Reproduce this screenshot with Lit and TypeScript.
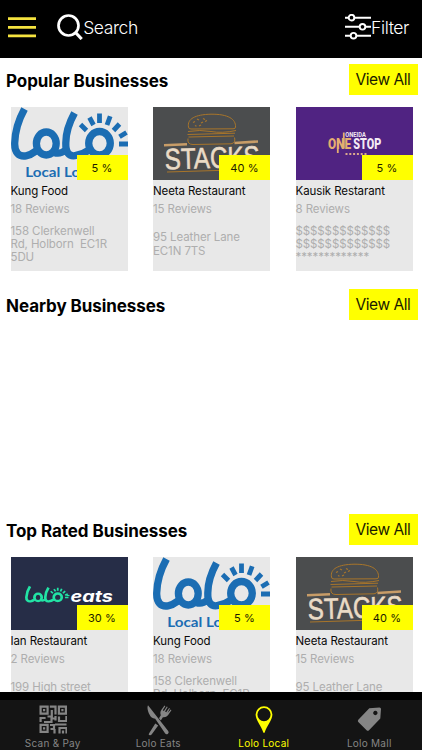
import { LitElement, html, svg, css } from "lit";
import { customElement, property } from "lit/decorators.js";

type Logo = "lolo" | "stacks" | "onestop" | "eats";

interface Business {
  logo: Logo;
  name: string;
  reviews: number;
  discount: number;
  address: string[];
}

const kungFood: Business = {
  logo: "lolo",
  name: "Kung Food",
  reviews: 18,
  discount: 5,
  address: ["158 Clerkenwell", "Rd, Holborn  EC1R", "5DU"],
};
const neeta: Business = {
  logo: "stacks",
  name: "Neeta Restaurant",
  reviews: 15,
  discount: 40,
  address: ["95 Leather Lane", "EC1N 7TS"],
};
const kausik: Business = {
  logo: "onestop",
  name: "Kausik Restarant",
  reviews: 8,
  discount: 5,
  address: ["$$$$$$$$$$$$$", "$$$$$$$$$$$$$", "*************"],
};
const ian: Business = {
  logo: "eats",
  name: "Ian Restaurant",
  reviews: 2,
  discount: 30,
  address: ["199 High street", "London"],
};

const loloMark = svg`
  <g fill="none" stroke="currentColor" stroke-width="7.3">
    <path d="M13.500 2C8 12 4 24 3.700 36C3.400 45.500 8 50 15 48.800Q20 47.800 25 44"/>
    <ellipse cx="35.300" cy="36.500" rx="9.900" ry="11.500"/>
    <path d="M43 45.500Q49 47.500 54 43.500"/>
    <path d="M63.500 6C58 16 54.800 26 54.800 36C54.500 45.500 58 49.500 64 48.700Q71 47.900 78 43"/>
    <ellipse cx="88.500" cy="36.200" rx="10.800" ry="11.700"/>
    <path stroke-width="4.800" d="M69.500 17.500L75.500 23.500M78.500 10.500L82.500 18M88.500 6.500V16M99.200 9.200L96 18M108.500 17L102.500 23.500M115.500 25.500L108.500 29.800M117.500 37H108"/>
  </g>`;

const logos = {
  lolo: svg`
    <rect width="117" height="73" fill="#e8e8e8"/>
    <g color="#1b6db3">${loloMark}</g>
    <text x="14.200" y="69.500" font-family="Lato, sans-serif" font-weight="700" font-size="14" fill="#1b6db3" textLength="55" lengthAdjust="spacingAndGlyphs">Local Lo</text>`,
  stacks: svg`
    <rect width="117" height="73" fill="#4b4d4e"/>
    <g fill="none" stroke="#a8752a" stroke-width="1">
      <path d="M35.500 20C34 12 42 7.500 58 7.200C75 7 83 12 82.500 20Q82.500 22 80 21.800L38 22Q35.500 22 35.500 20Z"/>
      <path d="M35 24.500Q47 22.500 58 24.500T83 23.500M34.500 27.500L82 26.200M35.500 30L81 29M35 31.500Q34 37.500 40 37.500L78 36.800Q83 36 81.500 30.500"/>
      <path d="M40 15.500l2-1M44 12l2 1M48 16l2-1M50 11.500l2 1M46 19l2-1M42 18.500l1.500 .8M52 14.500l2-1" stroke-width="1.200"/>
      <path d="M14 65L70 63.300"/>
    </g>
    <path d="M11 38.200L34 37.200M81.500 36L105 34.500" stroke="#c79c67" stroke-width="2.600"/>
    <text x="12" y="62.500" transform="rotate(-1.800 12 62.500)" font-family="Liberation Sans, sans-serif" font-size="29.500" fill="#eadbc6" stroke="#eadbc6" stroke-width=".6" textLength="95" lengthAdjust="spacingAndGlyphs">STACKS</text>`,
  onestop: svg`
    <rect width="117" height="73" fill="#502382"/>
    <g font-family="Roboto, sans-serif" font-weight="700">
      <text x="49.300" y="29.500" font-size="6.500" fill="#efe6f2" textLength="20.500" lengthAdjust="spacingAndGlyphs">ONEIDA</text>
      <text x="32" y="41.500" font-size="14" font-weight="900" fill="#e4ae70" textLength="23" lengthAdjust="spacingAndGlyphs">ONE</text>
      <text x="57.300" y="41.500" font-size="14" font-weight="900" fill="#f3eaf4" textLength="28" lengthAdjust="spacingAndGlyphs">STOP</text>
    </g>
    <path d="M41.800 31.500V46M47.800 41.500V25.500" fill="none" stroke="#e4ae70" stroke-width="1.800"/>
    <path d="M49.500 47H70.500" stroke="#dba98d" stroke-width="2" stroke-dasharray="2 1.800"/>`,
  eats: svg`
    <rect width="117" height="73" fill="#262d47"/>
    <g color="#22e3a5" transform="translate(14 28.700) scale(.37 .32)">${loloMark}</g>
    <path d="M55.500 38.500h3" stroke="#22e3a5" stroke-width="1.200"/>
    <text x="59.500" y="44.500" font-family="Inter, sans-serif" font-size="15.500" font-style="italic" font-weight="700" fill="#fff" textLength="42.500" lengthAdjust="spacingAndGlyphs">eats</text>`,
};

@customElement("business-card")
class BusinessCard extends LitElement {
  @property({ attribute: false }) item!: Business;

  static styles = css`
    :host {
      display: block;
      width: 117px;
      height: 164px;
      background: #e8e8e8;
      flex: none;
    }
    .picture {
      position: relative;
      height: 73px;
    }
    .logo {
      display: block;
      width: 117px;
      height: 73px;
    }
    .badge {
      position: absolute;
      right: 0;
      bottom: 0;
      width: 51px;
      height: 25px;
      background: #ff0;
      color: #1c1c00;
      font-size: 11px;
      letter-spacing: 0.1px;
      line-height: 26px;
      text-align: center;
    }
    .name {
      font-size: 11.500px;
      line-height: 16px;
      margin-top: 3px;
      color: #0a0a0a;
      letter-spacing: -0.1px;
      white-space: nowrap;
    }
    .reviews {
      font-size: 11.500px;
      line-height: 16px;
      margin-top: 2px;
      color: #aeaeae;
      letter-spacing: -0.1px;
    }
    .address {
      height: 54px;
      padding-top: 0.600px;
      display: flex;
      flex-direction: column;
      justify-content: center;
      font-size: 11.500px;
      line-height: 13.200px;
      color: #aeaeae;
      letter-spacing: -0.1px;
      white-space: pre;
    }
  `;

  render() {
    const { logo, name, reviews, discount, address } = this.item;
    return html`
      <div class="picture">
        <svg class="logo" viewBox="0 0 117 73">${logos[logo]}</svg>
        <div class="badge">${discount} %</div>
      </div>
      <div class="name">${name}</div>
      <div class="reviews">${reviews} Reviews</div>
      <div class="address">${address.map((l) => html`<div>${l}</div>`)}</div>
    `;
  }
}

const icons = {
  qr: svg`
    <g fill="none" stroke="currentColor" stroke-width="2.200">
      <path d="M1.600 1.600h7v7h-7zM19.900 1.600h7v7h-7zM1.600 19.900h7v7h-7z"/>
      <path d="M10.800 1.600h5.700v8M12.800 5v6.500H8.500M1.600 17v-4h5M5 17h7.500v-3.500h4.500M16.500 11v4.500M20 11.500v4.500h7.400v-5M11 20h4v4h-3.500M16 19.500h11.500M15.500 24v4.500M20.500 28.500v-5.500h7v5.500M24 25.500v3"/>
    </g>
    <path d="M4 4h2.200v2.200H4zM22.300 4h2.200v2.200h-2.200zM4 22.300h2.200v2.200H4z" fill="currentColor"/>`,
  eats: svg`
    <path fill="currentColor" d="M4 .2C2.800 2.500 4 6.500 5.500 9.500C6.500 12 8.500 13.500 11.200 13.700L21 28.200Q22.200 30 24 28.700Q25.300 27.500 24.200 26Z"/>
    <path fill="currentColor" d="M11.300 18.500L5 28.600Q4 30.200 5.800 30.300Q7 30.500 8 29L14.200 20.500ZM15 13.200L16.800 10.200Q15.500 7 17.800 4.300L20.500 .6L21.300 1.200L18.800 5.300L19.900 6L22.800 1.500L23.700 2.100L21.100 6.600L22.200 7.300L25.100 3L25.900 3.600L23.500 7.900L26.800 4.500L27.400 5.200L24 10.300Q22 12.700 18.900 12.200L16.800 15.600Z"/>`,
  pin: svg`
    <path fill="currentColor" fill-rule="evenodd" d="M14 1.200A8.400 8.400 0 0 0 5.600 9.600C5.600 15 11.500 21.500 13.200 27.200Q14 28.600 14.800 27.200C16.500 21.500 22.400 15 22.400 9.600A8.400 8.400 0 0 0 14 1.200ZM14 3A6.600 6.600 0 1 1 14 16.200A6.600 6.600 0 0 1 14 3Z"/>`,
  tag: svg`
    <path fill="currentColor" fill-rule="evenodd" d="M14.300 3.200L24.500 2.500Q26 2.500 26 4L25.300 13.600L14 25.200Q12.800 26.400 11.600 25.200L3.300 17Q2.300 16 3.300 14.800ZM20.300 5.800a2.200 2.200 0 1 0 .1 0Z"/>`,
};

const sections = [
  { title: "Popular Businesses", items: [kungFood, neeta, kausik] },
  { title: "Nearby Businesses", items: [] as Business[] },
  { title: "Top Rated Businesses", items: [ian, kungFood, neeta] },
];

const tabs = [
  { label: "Scan & Pay", icon: icons.qr, active: false },
  { label: "Lolo Eats", icon: icons.eats, active: false },
  { label: "Lolo Local", icon: icons.pin, active: true },
  { label: "Lolo Mall", icon: icons.tag, active: false },
];

@customElement("app-root")
class AppRoot extends LitElement {
  static styles = css`
    :host {
      display: flex;
      flex-direction: column;
      width: 422px;
      height: 750px;
      overflow: hidden;
      background: #fff;
      font-family: Inter, "Liberation Sans", sans-serif;
    }
    .header {
      box-sizing: border-box;
      height: 58px;
      flex: none;
      background: #000;
      color: #fff;
      display: flex;
      align-items: center;
      padding: 0 13px 4px 8px;
      font-size: 17.500px;
      font-weight: 300;
      letter-spacing: -0.4px;
    }
    .menu {
      width: 28px;
      height: 22px;
      margin-right: 21px;
    }
    .lens {
      width: 26px;
      height: 26px;
    }
    .search {
      flex: 1;
      margin-left: 0.200px;
    }
    .sliders {
      width: 26px;
      height: 26px;
    }
    .content {
      flex: 1;
      min-height: 0;
      overflow: hidden;
    }
    .section {
      height: 225px;
    }
    .heading {
      display: flex;
      justify-content: space-between;
      align-items: center;
      padding: 6px 4.500px 0 6px;
      height: 31px;
    }
    .title {
      font-size: 17px;
      font-weight: 700;
      letter-spacing: -0.060px;
      padding-top: 2px;
      color: #000;
    }
    .view-all {
      width: 69px;
      height: 31px;
      background: #ff0;
      color: #1a1a00;
      font-size: 15.500px;
      letter-spacing: -0.450px;
      line-height: 32px;
      text-align: center;
    }
    .cards {
      display: flex;
      gap: 25.500px;
      padding: 12px 0 0 10.500px;
    }
    .tabs {
      flex: none;
      box-sizing: border-box;
      height: 58.500px;
      display: flex;
      background: #141414;
      border-top: 8px solid #000;
    }
    .tab {
      flex: 1;
      display: flex;
      flex-direction: column;
      align-items: center;
      color: #858585;
      font-size: 10px;
      letter-spacing: 0.250px;
    }
    .tab.active {
      color: #ff0;
    }
    .tab-icon {
      width: 28.500px;
      height: 31px;
      margin-top: 5px;
    }
    .tab-label {
      line-height: 14px;
    }
  `;

  render() {
    return html`
      <div class="header">
        <svg class="menu" viewBox="0 0 28 22">
          <path d="M0 2.600h28M0 11.300h28M0 19.800h28" stroke="#f5e33f" stroke-width="2.800" />
        </svg>
        <svg class="lens" viewBox="0 0 26 26" fill="none" stroke="#fff">
          <circle cx="11.500" cy="11.500" r="10" stroke-width="2.700" />
          <path d="M18.500 18.500L24.700 25" stroke-width="3.200" />
        </svg>
        <span class="search">Search</span>
        <svg class="sliders" viewBox="0 0 26 26" fill="none" stroke="#fff" stroke-width="1.900">
          <path d="M0 3.700h3.500M9.500 3.700H26M0 12.800h14.500M20.500 12.800H26M0 21.700h5.500M11.500 21.700H26" />
          <circle cx="6.500" cy="3.700" r="2.800" />
          <circle cx="17.500" cy="12.800" r="2.800" />
          <circle cx="8.500" cy="21.700" r="2.800" />
        </svg>
        <span>Filter</span>
      </div>
      <div class="content">
        ${sections.map(
          (s) => html`
            <div class="section">
              <div class="heading">
                <span class="title">${s.title}</span>
                <div class="view-all">View All</div>
              </div>
              <div class="cards">
                ${s.items.map((b) => html`<business-card .item=${b}></business-card>`)}
              </div>
            </div>
          `
        )}
      </div>
      <div class="tabs">
        ${tabs.map(
          (t) => html`
            <div class="tab ${t.active ? "active" : ""}">
              <svg class="tab-icon" viewBox="0 0 28.500 31">${t.icon}</svg>
              <span class="tab-label">${t.label}</span>
            </div>
          `
        )}
      </div>
    `;
  }
}
